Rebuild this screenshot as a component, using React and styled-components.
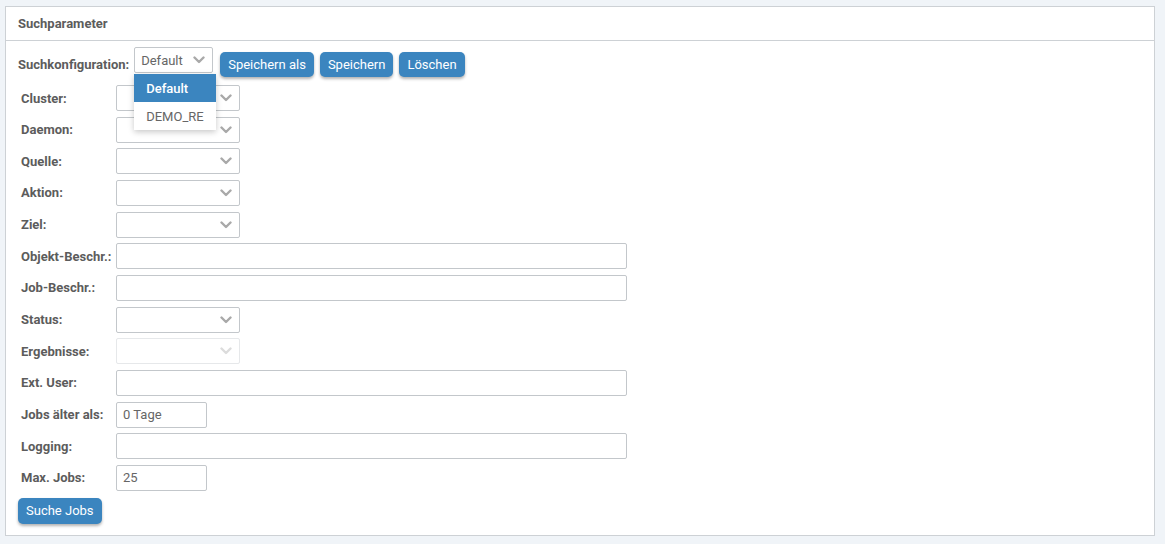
import React from "react";
import styled, { createGlobalStyle } from "styled-components";

const Global = createGlobalStyle`
  html, body { margin: 0; padding: 0; background: #f0f4f8; }
  body { font-family: Roboto, "Liberation Sans", Arial, sans-serif; }
  * { box-sizing: border-box; }
`;

const Page = styled.div`
  padding: 6px 10px 8px 5px;
  min-height: 544px;
`;

const Panel = styled.section`
  background: #fff;
  border: 1px solid #cdd1d5;
`;

const PanelHeader = styled.div`
  height: 34px;
  padding: 0 12px;
  display: flex;
  align-items: center;
  border-bottom: 1px solid #cdd1d5;
  font-size: 13px;
  font-weight: 700;
  color: #5c5c5c;
`;

const PanelBody = styled.div`
  padding: 6px 12px 11px 12px;
  display: flex;
  flex-direction: column;
  align-items: flex-start;
`;

const ConfigRow = styled.div`
  display: flex;
  align-items: flex-start;
`;

const Label = styled.label`
  font-size: 13px;
  font-weight: 700;
  color: #5c5c5c;
  white-space: nowrap;
`;

const ConfigLabel = styled(Label)`
  margin-top: 10px;
  margin-right: 5px;
`;

const SelectWrap = styled.div`
  position: relative;
`;

const SelectBox = styled.div`
  width: ${(p) => p.$width}px;
  height: 26px;
  border: 1px solid ${(p) => (p.$disabled ? "#e6e8ea" : "#c3c7cb")};
  border-radius: 2px;
  background: #fff;
  display: flex;
  align-items: center;
  justify-content: space-between;
  padding: 0 7px 0 6px;
  font-size: 13px;
  color: #666;
`;

const Menu = styled.ul`
  position: absolute;
  top: 27px;
  left: 0;
  width: 82px;
  margin: 0;
  padding: 0;
  list-style: none;
  background: #fff;
  box-shadow: 0 2px 6px rgba(0, 0, 0, 0.22);
  z-index: 5;
`;

const MenuItem = styled.li`
  height: 28px;
  display: flex;
  align-items: center;
  padding-left: 12px;
  font-size: 13px;
  background: ${(p) => (p.$active ? "#3b85bf" : "#fff")};
  color: ${(p) => (p.$active ? "#fff" : "#666")};
  font-weight: ${(p) => (p.$active ? 500 : 400)};
`;

const Button = styled.button`
  height: 25px;
  margin-top: ${(p) => (p.$offset ? "5px" : "0")};
  margin-left: ${(p) => p.$ml || 0}px;
  padding: 0 8px;
  border: none;
  border-radius: 5px;
  background: #3b85bf;
  color: #fff;
  font-family: inherit;
  font-size: 13px;
  box-shadow: 0 2px 3px rgba(0, 0, 0, 0.3);
  cursor: pointer;
`;

const FieldGrid = styled.div`
  margin: 8px 0 0 3px;
  display: grid;
  grid-template-columns: 95px auto;
  row-gap: 5.67px;
  align-items: center;
`;

const TextInput = styled.div`
  width: ${(p) => p.$width}px;
  height: 26px;
  border: 1px solid #c3c7cb;
  border-radius: 2px;
  background: #fff;
  display: flex;
  align-items: center;
  padding: 0 6px;
  font-size: 13px;
  color: #666;
`;

const SearchButton = styled(Button)`
  margin-top: 7px;
  height: 26px;
`;

const Chevron = ({ light }) => (
  <svg width="12" height="8" viewBox="0 0 12 8" aria-hidden="true">
    <polyline
      points="1.5,1.5 6,6 10.5,1.5"
      fill="none"
      stroke={light ? "#dcdcdc" : "#a9a9a9"}
      strokeWidth="2.4"
      strokeLinecap="round"
      strokeLinejoin="round"
    />
  </svg>
);

const Select = ({ width = 124, value = "", disabled, children }) => (
  <SelectWrap>
    <SelectBox $width={width} $disabled={disabled}>
      <span>{value}</span>
      <Chevron light={disabled} />
    </SelectBox>
    {children}
  </SelectWrap>
);

const fields = [
  { label: "Cluster:", type: "select" },
  { label: "Daemon:", type: "select" },
  { label: "Quelle:", type: "select" },
  { label: "Aktion:", type: "select" },
  { label: "Ziel:", type: "select" },
  { label: "Objekt-Beschr.:", type: "wide" },
  { label: "Job-Beschr.:", type: "wide" },
  { label: "Status:", type: "select" },
  { label: "Ergebnisse:", type: "select", disabled: true },
  { label: "Ext. User:", type: "wide" },
  { label: "Jobs älter als:", type: "small", value: "0 Tage" },
  { label: "Logging:", type: "wide" },
  { label: "Max. Jobs:", type: "small", value: "25" },
];

export default function App() {
  return (
    <Page>
      <Global />
      <Panel>
        <PanelHeader>Suchparameter</PanelHeader>
        <PanelBody>
          <ConfigRow>
            <ConfigLabel>Suchkonfiguration:</ConfigLabel>
            <Select width={79} value="Default">
              <Menu>
                <MenuItem $active>Default</MenuItem>
                <MenuItem>DEMO_RE</MenuItem>
              </Menu>
            </Select>
            <Button $offset $ml={7}>Speichern als</Button>
            <Button $offset $ml={6}>Speichern</Button>
            <Button $offset $ml={6}>Löschen</Button>
          </ConfigRow>
          <FieldGrid>
            {fields.map((f) => (
              <React.Fragment key={f.label}>
                <Label>{f.label}</Label>
                {f.type === "select" && <Select disabled={f.disabled} />}
                {f.type === "wide" && <TextInput $width={511} />}
                {f.type === "small" && <TextInput $width={91}>{f.value}</TextInput>}
              </React.Fragment>
            ))}
          </FieldGrid>
          <SearchButton>Suche Jobs</SearchButton>
        </PanelBody>
      </Panel>
    </Page>
  );
}
